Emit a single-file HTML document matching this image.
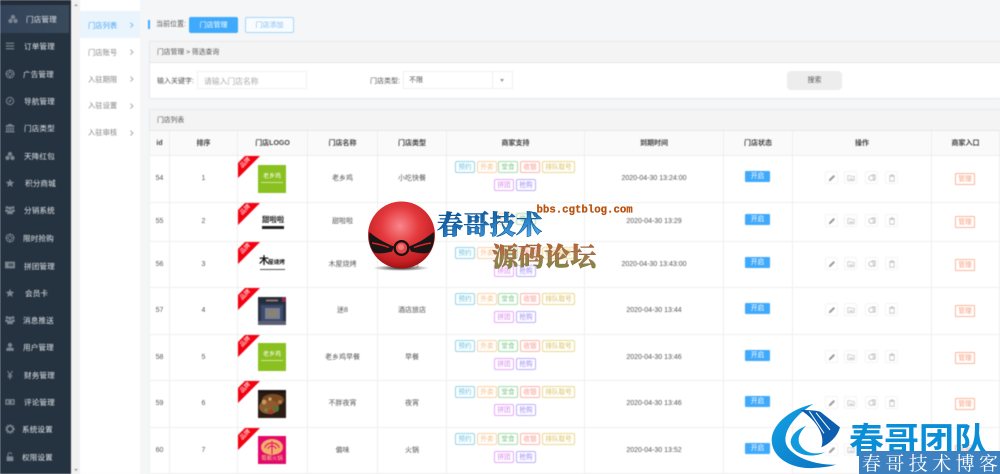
<!DOCTYPE html>
<html lang="zh-CN"><head><meta charset="utf-8"><title>门店管理</title>
<style>
html,body{margin:0;padding:0;width:1000px;height:474px;overflow:hidden;background:#f5f6f8}
body{font-family:"Liberation Sans","Noto Sans CJK SC",sans-serif;font-size:7px;color:#666}
#app{position:absolute;left:0;top:0;width:1000px;height:474px;overflow:hidden;filter:blur(.4px)}
#app div,#app span,#app b,#app svg.ic{position:absolute;white-space:nowrap}
.side{left:0;top:0;width:70.5px;height:474px;background:#253340}
.act{left:0;top:5px;width:69px;height:28px;background:linear-gradient(90deg,#33435a,#3a4a5c)}
.n{font-size:7.6px;line-height:15px;color:#e2e6ea;letter-spacing:.1px}
.ic{left:5px;width:10px;height:10px;color:#7b868f}
.sb{left:71px;top:0;width:9px;height:474px;background:#f1f1f1}
.sub{left:80px;top:0;width:59.5px;height:474px;background:#fff}
.sa{left:0;top:11px;width:59.5px;height:27px;background:#eaf4fd}
.s{left:8px;font-size:7.3px;line-height:15px;color:#858585}
.ch{left:49px;width:2.5px;height:2.5px;border-top:1px solid #aaa;border-right:1px solid #aaa;transform:rotate(45deg)}
.panel{left:149px;width:851px;background:#fff;border:1px solid #e7e8ea;border-right:0;box-sizing:border-box}
.ph{left:0;top:0;width:851px;height:20px;background:#f4f4f4;border-bottom:1px solid #e7e7e7;line-height:21px;font-size:6.8px;color:#555;text-indent:7px}
.lab{font-size:7px;color:#555;line-height:15px}
.inp{background:#fff;border:1px solid #f0f0f0;box-sizing:border-box;height:18px;top:71px}
.thead{left:150px;top:131px;width:850px;height:24px;background:#fafafa;border-bottom:1px solid #eee;box-sizing:content-box}
.th{top:0;line-height:25px;text-align:center;font-size:7px;font-weight:bold;color:#444}
.vl{top:131px;width:1px;height:343px;background:#eeeeee}
.r{left:0;width:1000px;height:var(--h);--o:0px;border-bottom:1px solid #eee;box-sizing:content-box}
.tx{top:0;line-height:var(--h);text-align:center;font-size:7px;color:#555}
.c1{left:150px;width:19px}.c2{left:170px;width:67px}.c3{left:308px;width:69px}.c4{left:378px;width:68px}.c5{left:585px;width:138px}
.rb{left:238px;top:0;width:22px;height:22px}
.pp{left:238.5px;top:3px;width:14px;height:9px;line-height:9.5px;text-align:center;color:#fff;font-size:6px;transform:rotate(-45deg)}
.lg{left:258px;width:28px;height:28px;overflow:hidden}
.t{height:12px;line-height:11.5px;border:1px solid;border-radius:2px;box-sizing:border-box;text-align:center;font-size:6.6px;background:#fff}
.y{left:455px;width:20px;color:#6cc5e0;border-color:#8fd5ea}
.w{left:477px;width:20px;color:#f9bd80;border-color:#fbd2a6}
.d{left:498px;width:20px;color:#7cc888;border-color:#a5dcab}
.g{left:520px;width:20px;color:#f99a8c;border-color:#fbb5aa}
.q{left:542px;width:33px;color:#d9c060;border-color:#e8d98c}
.p{left:494px;width:20px;color:#d685ee;border-color:#e3a8f6}
.o{left:516px;width:20px;color:#9a88f6;border-color:#bbaefa}
.l1{top:5px}.l2{top:23px}
.bd{left:745px;top:calc(15px + var(--o));width:25px;height:10.5px;line-height:11.5px;background:#3fa9fb;color:#fff;text-align:center;font-size:6.8px;border-radius:1px}
.ab{top:calc(15px + var(--o));width:13px;height:13px;background:#fff;border:1px solid #f4f4f4;border-radius:2px;box-sizing:border-box}
.ab svg{position:absolute;left:2px;top:2px;width:8px;height:8px}
.a1{left:825px}.a2{left:844px}.a3{left:865px}.a4{left:885px}
.m{left:955px;top:calc(17px + var(--o));width:20px;height:12px;line-height:11.5px;border:1px solid #fbb39a;color:#fa9c7c;text-align:center;font-size:6.6px;box-sizing:border-box;border-radius:1px;background:#fff}
#wm{position:absolute;left:0;top:0;filter:blur(.3px)}
</style></head>
<body>
<svg width="0" height="0" style="position:absolute">
<symbol id="i-cube" viewBox="0 0 12 12"><g fill="currentColor"><circle cx="6" cy="3.6" r="2.6"/><circle cx="3" cy="8.3" r="2.6"/><circle cx="9" cy="8.3" r="2.6"/></g></symbol>
<symbol id="i-bars" viewBox="0 0 12 12"><g fill="currentColor"><rect x="1" y="2" width="10" height="1.4"/><rect x="1" y="5.3" width="10" height="1.4"/><rect x="1" y="8.6" width="10" height="1.4"/></g></symbol>
<symbol id="i-ring" viewBox="0 0 12 12"><g fill="none" stroke="currentColor"><circle cx="6" cy="6" r="4.7" stroke-width="1.2"/><circle cx="6" cy="6" r="2.2" stroke-width="1"/><path d="M6 1v3M6 8v3M1 6h3M8 6h3" stroke-width="1"/></g></symbol>
<symbol id="i-comp" viewBox="0 0 12 12"><circle cx="6" cy="6" r="4.3" fill="none" stroke="currentColor" stroke-width="1.2"/><path d="M8 3.8 6.8 6.8 4 8.2 5.2 5.2Z" fill="currentColor"/></symbol>
<symbol id="i-bank" viewBox="0 0 12 12"><path d="M6 .8 11.5 3.4V4.3H.5V3.4ZM1.5 5h1.5v4.3H1.5ZM4 5h1.5v4.3H4ZM6.5 5H8v4.3H6.5ZM9 5h1.5v4.3H9ZM.5 9.8h11v1.4H.5Z" fill="currentColor"/></symbol>
<symbol id="i-star" viewBox="0 0 12 12"><path d="M6 1 7.5 4.4 11.2 4.8 8.4 7.2 9.2 10.8 6 8.9 2.8 10.8 3.6 7.2.8 4.8 4.5 4.4Z" fill="currentColor"/></symbol>
<symbol id="i-group" viewBox="0 0 12 12"><g fill="currentColor"><circle cx="2.4" cy="3" r="1.7"/><circle cx="9.6" cy="3" r="1.7"/><circle cx="6" cy="4" r="2"/><path d="M.3 5.4h3l.4 3H.3ZM8.4 5.4h3.3v3H8.2ZM3 6.6h6l.6 4.4H2.4Z"/></g></symbol>
<symbol id="i-card" viewBox="0 0 12 12"><rect x="0" y="2" width="12" height="8" rx=".6" fill="currentColor"/><rect x="4" y="4" width="6" height="3.6" fill="#4a5662"/></symbol>
<symbol id="i-user" viewBox="0 0 12 12"><g fill="currentColor"><circle cx="6" cy="3.6" r="2.6"/><path d="M1.5 10.6V8.6C1.5 7 3 6.6 6 6.6S10.5 7 10.5 8.6v2Z"/></g></symbol>
<symbol id="i-yen" viewBox="0 0 12 12"><path d="M3 1.2 6 5.6 9 1.2M3.4 6.3h5.2M3.4 8.2h5.2M6 5.6v5.6" fill="none" stroke="currentColor" stroke-width="1.3"/></symbol>
<symbol id="i-mon" viewBox="0 0 12 12"><rect x=".4" y="2.6" width="11.2" height="6.8" fill="currentColor"/><rect x="1.8" y="4" width="8.4" height="4" fill="#3c4854"/><circle cx="6" cy="6" r="2" fill="currentColor"/></symbol>
<symbol id="i-gear" viewBox="0 0 12 12"><circle cx="6" cy="6" r="3.6" fill="none" stroke="currentColor" stroke-width="1.9"/><circle cx="6" cy="6" r="5" fill="none" stroke="currentColor" stroke-width="1.4" stroke-dasharray="1.8 1.5"/></symbol>
<symbol id="i-lock" viewBox="0 0 12 12"><path d="M3.6 5.2V3.2A2.2 2.2 0 0 1 8 3" fill="none" stroke="currentColor" stroke-width="1.2"/><rect x="2" y="5.2" width="8" height="5.8" rx=".6" fill="currentColor"/></symbol>
<symbol id="a-pen" viewBox="0 0 10 10"><path d="M7 1.2 8.8 3 3.4 8.4 1 9 1.6 6.6Z" fill="#999"/></symbol>
<symbol id="a-img" viewBox="0 0 10 10"><path d="M1 2h3l1 1h4v5.4H1Z" fill="none" stroke="#c6c6c6" stroke-width="1"/><path d="M2.4 7.4 4.2 5l1.4 1.4L7 5.2l1 2.2Z" fill="#c6c6c6"/></symbol>
<symbol id="a-cp" viewBox="0 0 10 10"><g fill="none" stroke="#b4b4b4" stroke-width="1"><circle cx="4" cy="5" r="3"/><path d="M4.6 1.2h4.2v6.4H6.6"/></g></symbol>
<symbol id="a-del" viewBox="0 0 10 10"><path d="M2.2 3h5.6v6H2.2ZM1.5 2h7M3.5 1h3" fill="none" stroke="#c4c4c4" stroke-width="1"/></symbol>
</svg>

<div id="app">
<div class="side"><div style="left:0;top:0;width:70.5px;height:5px;background:#212d39"></div><div class="act"></div>
<svg class="ic" style="top:14px;left:8px"><use href="#i-cube"/></svg><div class="n" style="left:26px;top:12px">门店管理</div>
<svg class="ic" style="top:41px"><use href="#i-bars"/></svg><div class="n" style="left:24px;top:39px">订单管理</div>
<svg class="ic" style="top:69px"><use href="#i-ring"/></svg><div class="n" style="left:23px;top:67px">广告管理</div>
<svg class="ic" style="top:96px"><use href="#i-comp"/></svg><div class="n" style="left:24px;top:94px">导航管理</div>
<svg class="ic" style="top:123px"><use href="#i-bank"/></svg><div class="n" style="left:24px;top:121px">门店类型</div>
<svg class="ic" style="top:151px"><use href="#i-cube"/></svg><div class="n" style="left:24px;top:149px">天降红包</div>
<svg class="ic" style="top:178px"><use href="#i-star"/></svg><div class="n" style="left:25px;top:176px">积分商城</div>
<svg class="ic" style="top:205px"><use href="#i-group"/></svg><div class="n" style="left:24px;top:203px">分销系统</div>
<svg class="ic" style="top:233px"><use href="#i-ring"/></svg><div class="n" style="left:23px;top:231px">限时抢购</div>
<svg class="ic" style="top:260px"><use href="#i-card"/></svg><div class="n" style="left:24px;top:259px">拼团管理</div>
<svg class="ic" style="top:288px"><use href="#i-star"/></svg><div class="n" style="left:25px;top:286px">会员卡</div>
<svg class="ic" style="top:315px"><use href="#i-group"/></svg><div class="n" style="left:23px;top:313px">消息推送</div>
<svg class="ic" style="top:342px"><use href="#i-user"/></svg><div class="n" style="left:23px;top:340px">用户管理</div>
<svg class="ic" style="top:370px"><use href="#i-yen"/></svg><div class="n" style="left:24px;top:368px">财务管理</div>
<svg class="ic" style="top:397px"><use href="#i-mon"/></svg><div class="n" style="left:24px;top:395px">评论管理</div>
<svg class="ic" style="top:424px"><use href="#i-gear"/></svg><div class="n" style="left:22px;top:422px">系统设置</div>
<svg class="ic" style="top:452px"><use href="#i-lock"/></svg><div class="n" style="left:22px;top:450px">权限设置</div>
</div>
<div class="sb"><div style="left:3px;top:4px;border-left:2px solid transparent;border-right:2px solid transparent;border-bottom:2px solid #999"></div><div style="left:3px;top:469px;border-left:2px solid transparent;border-right:2px solid transparent;border-top:2px solid #999"></div></div>
<div class="sub"><div class="sa"></div>
<div class="s" style="top:17.5px;color:#4aa8f5">门店列表</div><div class="ch" style="top:23px;border-color:#7dbdf2"></div>
<div class="s" style="top:44.5px">门店账号</div><div class="ch" style="top:50px"></div>
<div class="s" style="top:71.5px">入驻期限</div><div class="ch" style="top:77px"></div>
<div class="s" style="top:98px">入驻设置</div><div class="ch" style="top:103.5px"></div>
<div class="s" style="top:125px">入驻审核</div><div class="ch" style="top:130.5px"></div>
</div>

<div style="left:148px;top:20px;width:2px;height:9px;background:#3fa9fb"></div>
<div class="lab" style="left:156px;top:17px">当前位置:</div>
<div style="left:189px;top:17px;width:49px;height:16px;line-height:17px;background:#3fa9fb;border-radius:2px;text-align:center;color:#fff;font-size:7px">门店管理</div>
<div style="left:245px;top:17px;width:49px;height:16px;line-height:15px;box-sizing:border-box;border:1px solid #a6d5fa;background:#f9fcff;border-radius:2px;text-align:center;color:#7fbdf0;font-size:7px">门店添加</div>

<div class="panel" style="top:41px;height:58px"><div class="ph">门店管理 &gt; 筛选查询</div></div>
<div class="lab" style="left:157px;top:73.5px">输入关键字:</div>
<div class="inp" style="left:196.5px;width:110px"></div>
<div class="lab" style="left:204px;top:73.5px;color:#aaa;font-size:7.8px">请输入门店名称</div>
<div class="lab" style="left:370px;top:73.5px">门店类型:</div>
<div class="inp" style="left:403px;width:110px"></div>
<div style="left:492px;top:71px;width:1px;height:18px;background:#f0f0f0"></div>
<div style="left:500px;top:79px;border-left:2.5px solid transparent;border-right:2.5px solid transparent;border-top:3px solid #999"></div>
<div class="lab" style="left:409px;top:73px">不限</div>
<div style="left:787px;top:71px;width:55px;height:19px;line-height:20px;background:#ededed;border-radius:4px;text-align:center;color:#555">搜索</div>

<div class="panel" style="top:109px;height:365px;border-bottom:0"><div class="ph">门店列表</div></div>
<div class="thead"></div>
<div style="left:0;top:131px;width:1000px;height:24px">
<div class="th" style="left:150px;width:19px">id</div><div class="th" style="left:170px;width:67px">排序</div><div class="th" style="left:238px;width:69px">门店LOGO</div><div class="th" style="left:308px;width:69px">门店名称</div><div class="th" style="left:378px;width:68px">门店类型</div><div class="th" style="left:447px;width:137px">商家支持</div><div class="th" style="left:585px;width:138px">到期时间</div><div class="th" style="left:724px;width:68px">门店状态</div><div class="th" style="left:793px;width:138px">操作</div><div class="th" style="left:932px;width:67px">商家入口</div>
</div>

<!-- row 1 -->
<div class="r" style="top:156px;--h:46px;width:851px;left:149px;"><div style="left:-149px;top:0;width:1000px;height:46px">
<div class="tx c1">54</div><div class="tx c2">1</div><div class="tx c3">老乡鸡</div><div class="tx c4">小吃快餐</div><div class="tx c5">2020-04-30 13:24:00</div>
<svg class="rb" style="position:absolute"><polygon points="7,0 22,0 0,22 0,7" fill="#f4000f"/></svg><div class="pp">品牌</div>
<div class="lg" style="top:9px;background:#8ac121"><div style="left:0;top:7.5px;width:28px;text-align:center;color:#fff;font-size:6px;line-height:8px">老乡鸡</div><div style="left:3px;top:17px;width:22px;height:1.2px;background:#cfe59a"></div></div>
<div class="t y l1">预约</div><div class="t w l1">外卖</div><div class="t d l1">堂食</div><div class="t g l1">收银</div><div class="t q l1">排队取号</div><div class="t p l2">拼团</div><div class="t o l2">抢购</div>
<div class="bd">开启</div>
<div class="ab a1"><svg><use href="#a-pen"/></svg></div><div class="ab a2"><svg><use href="#a-img"/></svg></div><div class="ab a3"><svg><use href="#a-cp"/></svg></div><div class="ab a4"><svg><use href="#a-del"/></svg></div>
<div class="m">管理</div></div></div>

<!-- row 2 -->
<div class="r" style="top:203px;--h:38px;width:851px;left:149px;"><div style="left:-149px;top:0;width:1000px;height:38px;--o:-4px">
<div class="tx c1">55</div><div class="tx c2">2</div><div class="tx c3">甜啦啦</div><div class="tx c4">饮品</div><div class="tx c5">2020-04-30 13:29</div>
<svg class="rb" style="position:absolute"><polygon points="7,0 22,0 0,22 0,7" fill="#f4000f"/></svg><div class="pp">品牌</div>
<div style="left:262px;top:11.5px;width:22px;text-align:center;font-size:7.4px;line-height:10px;font-weight:bold;color:#222">甜啦啦</div><div style="left:262px;top:22.5px;width:22px;height:3px;background:#222"></div>
<div class="t" style="left:493px;top:10px;width:20px;color:#f9bd80;border-color:#fbd2a6">外卖</div><div class="t" style="left:516px;top:10px;width:20px;color:#7cc888;border-color:#a5dcab">堂食</div>
<div class="bd">开启</div>
<div class="ab a1"><svg><use href="#a-pen"/></svg></div><div class="ab a2"><svg><use href="#a-img"/></svg></div><div class="ab a3"><svg><use href="#a-cp"/></svg></div><div class="ab a4"><svg><use href="#a-del"/></svg></div>
<div class="m">管理</div></div></div>

<!-- row 3 -->
<div class="r" style="top:242px;--h:45px;width:851px;left:149px;"><div style="left:-149px;top:0;width:1000px;height:45px">
<div class="tx c1">56</div><div class="tx c2">3</div><div class="tx c3">木屋烧烤</div><div class="tx c4">烧烤</div><div class="tx c5">2020-04-30 13:43:00</div>
<svg class="rb" style="position:absolute"><polygon points="7,0 22,0 0,22 0,7" fill="#f4000f"/></svg><div class="pp">品牌</div>
<div style="left:259px;top:14px;font-size:10px;line-height:12px;font-weight:bold;color:#111">木</div><div style="left:268px;top:17px;font-size:5.6px;line-height:8px;font-weight:bold;color:#111">屋烧烤</div><div style="left:260px;top:26.5px;width:25px;height:1.5px;background:#555"></div>
<div class="t y l1">预约</div><div class="t w l1">外卖</div><div class="t d l1">堂食</div><div class="t g l1">收银</div><div class="t q l1">排队取号</div><div class="t p l2">拼团</div><div class="t o l2">抢购</div>
<div class="bd">开启</div>
<div class="ab a1"><svg><use href="#a-pen"/></svg></div><div class="ab a2"><svg><use href="#a-img"/></svg></div><div class="ab a3"><svg><use href="#a-cp"/></svg></div><div class="ab a4"><svg><use href="#a-del"/></svg></div>
<div class="m">管理</div></div></div>

<!-- row 4 -->
<div class="r" style="top:288px;--h:46px;width:851px;left:149px;"><div style="left:-149px;top:0;width:1000px;height:46px">
<div class="tx c1">57</div><div class="tx c2">4</div><div class="tx c3">迷8</div><div class="tx c4">酒店旅店</div><div class="tx c5">2020-04-30 13:44</div>
<svg class="rb" style="position:absolute"><polygon points="7,0 22,0 0,22 0,7" fill="#f4000f"/></svg><div class="pp">品牌</div>
<div class="lg" style="top:9px;background:#2a3348"><svg style="position:absolute;left:0;top:0" width="28" height="28"><rect width="28" height="6" fill="#252c3a"/><rect x="8" y="2.5" width="12" height="2" fill="#8a7a66"/><rect x="3" y="8" width="22" height="16" fill="#3e4c6c"/><rect x="7" y="11" width="15" height="11" fill="#7b8190"/><rect x="10" y="13" width="9" height="7" fill="#8a8272"/><rect x="0" y="24" width="28" height="4" fill="#5a6070"/><rect x="24" y="0" width="4" height="5" fill="#8a2a4a"/></svg></div>
<div class="t y l1">预约</div><div class="t w l1">外卖</div><div class="t d l1">堂食</div><div class="t g l1">收银</div><div class="t q l1">排队取号</div><div class="t p l2">拼团</div><div class="t o l2">抢购</div>
<div class="bd">开启</div>
<div class="ab a1"><svg><use href="#a-pen"/></svg></div><div class="ab a2"><svg><use href="#a-img"/></svg></div><div class="ab a3"><svg><use href="#a-cp"/></svg></div><div class="ab a4"><svg><use href="#a-del"/></svg></div>
<div class="m">管理</div></div></div>

<!-- row 5 -->
<div class="r" style="top:335px;--h:45px;width:851px;left:149px;"><div style="left:-149px;top:0;width:1000px;height:45px">
<div class="tx c1">58</div><div class="tx c2">5</div><div class="tx c3">老乡鸡早餐</div><div class="tx c4">早餐</div><div class="tx c5">2020-04-30 13:46</div>
<svg class="rb" style="position:absolute"><polygon points="7,0 22,0 0,22 0,7" fill="#f4000f"/></svg><div class="pp">品牌</div>
<div class="lg" style="top:8px;background:#8ac121"><div style="left:0;top:7.5px;width:28px;text-align:center;color:#fff;font-size:6px;line-height:8px">老乡鸡</div><div style="left:3px;top:17px;width:22px;height:1.2px;background:#cfe59a"></div></div>
<div class="t y l1">预约</div><div class="t w l1">外卖</div><div class="t d l1">堂食</div><div class="t g l1">收银</div><div class="t q l1">排队取号</div><div class="t p l2">拼团</div><div class="t o l2">抢购</div>
<div class="bd">开启</div>
<div class="ab a1"><svg><use href="#a-pen"/></svg></div><div class="ab a2"><svg><use href="#a-img"/></svg></div><div class="ab a3"><svg><use href="#a-cp"/></svg></div><div class="ab a4"><svg><use href="#a-del"/></svg></div>
<div class="m">管理</div></div></div>

<!-- row 6 -->
<div class="r" style="top:381px;--h:46px;width:851px;left:149px;"><div style="left:-149px;top:0;width:1000px;height:46px">
<div class="tx c1">59</div><div class="tx c2">6</div><div class="tx c3">不胖夜宵</div><div class="tx c4">夜宵</div><div class="tx c5">2020-04-30 13:46</div>
<svg class="rb" style="position:absolute"><polygon points="7,0 22,0 0,22 0,7" fill="#f4000f"/></svg><div class="pp">品牌</div>
<div class="lg" style="top:9px;background:#2b1c14"><svg style="position:absolute;left:0;top:0" width="28" height="28"><ellipse cx="15" cy="10" rx="11" ry="6" fill="#7a4a22"/><ellipse cx="11" cy="17" rx="10" ry="7" fill="#8e5a2e"/><circle cx="6" cy="12" r="2.4" fill="#c49a60"/><circle cx="18" cy="19" r="3" fill="#57703a"/><circle cx="13" cy="22" r="2.4" fill="#a83c28"/><circle cx="22" cy="12" r="2" fill="#b07a44"/><circle cx="12" cy="9" r="1.6" fill="#d0a878"/><circle cx="8" cy="20" r="1.8" fill="#6d8a48"/><rect width="28" height="3" fill="#1e1511"/></svg></div>
<div class="t y l1">预约</div><div class="t w l1">外卖</div><div class="t d l1">堂食</div><div class="t g l1">收银</div><div class="t q l1">排队取号</div><div class="t p l2">拼团</div><div class="t o l2">抢购</div>
<div class="bd">开启</div>
<div class="ab a1"><svg><use href="#a-pen"/></svg></div><div class="ab a2"><svg><use href="#a-img"/></svg></div><div class="ab a3"><svg><use href="#a-cp"/></svg></div><div class="ab a4"><svg><use href="#a-del"/></svg></div>
<div class="m">管理</div></div></div>

<!-- row 7 -->
<div class="r" style="top:428px;--h:45px;width:851px;left:149px;"><div style="left:-149px;top:0;width:1000px;height:45px">
<div class="tx c1">60</div><div class="tx c2">7</div><div class="tx c3">偏味</div><div class="tx c4">火锅</div><div class="tx c5">2020-04-30 13:52</div>
<svg class="rb" style="position:absolute"><polygon points="7,0 22,0 0,22 0,7" fill="#f4000f"/></svg><div class="pp">品牌</div>
<div class="lg" style="top:8px;background:#e2096b"><svg style="position:absolute;left:0;top:0" width="28" height="28"><path d="M3 11A11 8 0 0 1 25 11Q25 18 14 19Q3 18 3 11Z" fill="#f4b06a"/><path d="M7 12A7 5 0 0 1 21 12M10 13A4 3 0 0 1 18 13M14 5V18" fill="none" stroke="#e2096b" stroke-width="1"/></svg><div style="left:0;top:20px;width:28px;text-align:center;color:#f7c68a;font-size:5.4px;line-height:6px">蜀都火锅</div></div>
<div class="t y l1">预约</div><div class="t w l1">外卖</div><div class="t d l1">堂食</div><div class="t g l1">收银</div><div class="t q l1">排队取号</div><div class="t p l2">拼团</div><div class="t o l2">抢购</div>
<div class="bd">开启</div>
<div class="ab a1"><svg><use href="#a-pen"/></svg></div><div class="ab a2"><svg><use href="#a-img"/></svg></div><div class="ab a3"><svg><use href="#a-cp"/></svg></div><div class="ab a4"><svg><use href="#a-del"/></svg></div>
<div class="m">管理</div></div></div>

<div class="vl" style="left:149px"></div><div class="vl" style="left:169px"></div><div class="vl" style="left:237px"></div><div class="vl" style="left:307px"></div><div class="vl" style="left:377px"></div><div class="vl" style="left:446px"></div><div class="vl" style="left:584px"></div><div class="vl" style="left:723px"></div><div class="vl" style="left:792px"></div><div class="vl" style="left:931px"></div><div class="vl" style="left:999px"></div>
</div>

<svg id="wm" width="1000" height="474" viewBox="0 0 1000 474">
<defs>
<radialGradient id="ball" gradientUnits="userSpaceOnUse" cx="400" cy="226" r="42"><stop offset="0" stop-color="#f9868c"/><stop offset=".45" stop-color="#e43a3e"/><stop offset=".85" stop-color="#c62024"/><stop offset="1" stop-color="#a01215"/></radialGradient>
<radialGradient id="shad" cx=".5" cy=".5" r=".5"><stop offset="0" stop-color="#222"/><stop offset="1" stop-color="#222" stop-opacity="0"/></radialGradient>
<linearGradient id="blue" x1="0" y1="0" x2=".6" y2="1"><stop offset="0" stop-color="#0a4782"/><stop offset=".5" stop-color="#1a6bb0"/><stop offset="1" stop-color="#4fa9ee"/></linearGradient>
<linearGradient id="mix" x1="0" y1="0" x2="0" y2="1"><stop offset="0" stop-color="#c9502f"/><stop offset=".5" stop-color="#a67a4a"/><stop offset="1" stop-color="#5f9440"/></linearGradient>
<linearGradient id="sw" x1="0" y1="0" x2="1" y2="1"><stop offset="0" stop-color="#12a4e6"/><stop offset="1" stop-color="#0a6fc0"/></linearGradient>
</defs>
<ellipse cx="401" cy="268" rx="28" ry="3" fill="url(#shad)"/>
<circle cx="401.5" cy="235" r="33.5" fill="url(#ball)"/>
<path d="M369.5 232C376 238 385 243 394 246.500L392 251.500C384 253.500 378 254 374 252.500C370 248 368 240 369.5 232Z" fill="#1a1616"/>
<path d="M433.500 232C427 238 418 243 409 246.500L411 251.500C419 253.500 425 254 429 252.500C433 248 435 240 433.500 232Z" fill="#1a1616"/>
<path d="M372 243C378 244 384 245.500 389 247.500M431 243C425 244 419 245.500 414 247.500" stroke="#d8262a" stroke-width="1.400" fill="none"/>
<circle cx="401.5" cy="248" r="8" fill="#1a1212"/><circle cx="401.5" cy="248" r="5.6" fill="#e8484c"/><circle cx="401" cy="247" r="3" fill="#f47a7e"/>
<text x="437" y="234" font-family="'Noto Serif CJK SC',serif" font-weight="900" font-size="26" textLength="105" lengthAdjust="spacing" fill="url(#blue)" stroke="#0c5a9c" stroke-width=".6">春哥技术</text>
<text x="492" y="266" font-family="'Noto Serif CJK SC',serif" font-weight="900" font-size="26" textLength="104" lengthAdjust="spacing" fill="url(#mix)" stroke="#9a6a40" stroke-width=".5">源码论坛</text>
<text x="536.5" y="212.5" font-family="'Liberation Mono',monospace" font-weight="700" font-size="10.7" fill="#b9520f" stroke="#b9520f" stroke-width=".25">bbs.cgtblog.com</text>

<g transform="translate(750,390) scale(.3333)">
<path d="M190 42C110 60 65 110 65 150C65 200 120 238 190 234C215 233 240 230 258 224C200 226 135 205 112 170C90 130 135 75 190 42Z" fill="url(#sw)"/>
<path d="M122 158C122 135 142 118 168 108C150 125 140 145 150 165C165 190 195 195 225 186C195 205 130 200 122 158Z" fill="#129adf"/>
<path d="M152 60C180 60 205 62 212 66L270 112C262 140 240 160 214 172C226 140 205 95 152 60Z" fill="#0b5fae"/>
<path d="M178 64 222 130M198 68 240 120" stroke="#fff" stroke-width="3" fill="none"/>
</g>
<text x="849" y="453" font-family="'Noto Sans CJK SC',sans-serif" font-weight="700" font-size="35" fill="#0a8ed8">春哥团队</text>
<rect x="859" y="451" width="141" height="23" fill="#3e81c1"/>
<text x="862" y="470" font-family="'Noto Serif CJK SC',serif" font-weight="400" font-size="19" textLength="136" lengthAdjust="spacing" fill="#fff">春哥技术博客</text>
</svg>
</body></html>
